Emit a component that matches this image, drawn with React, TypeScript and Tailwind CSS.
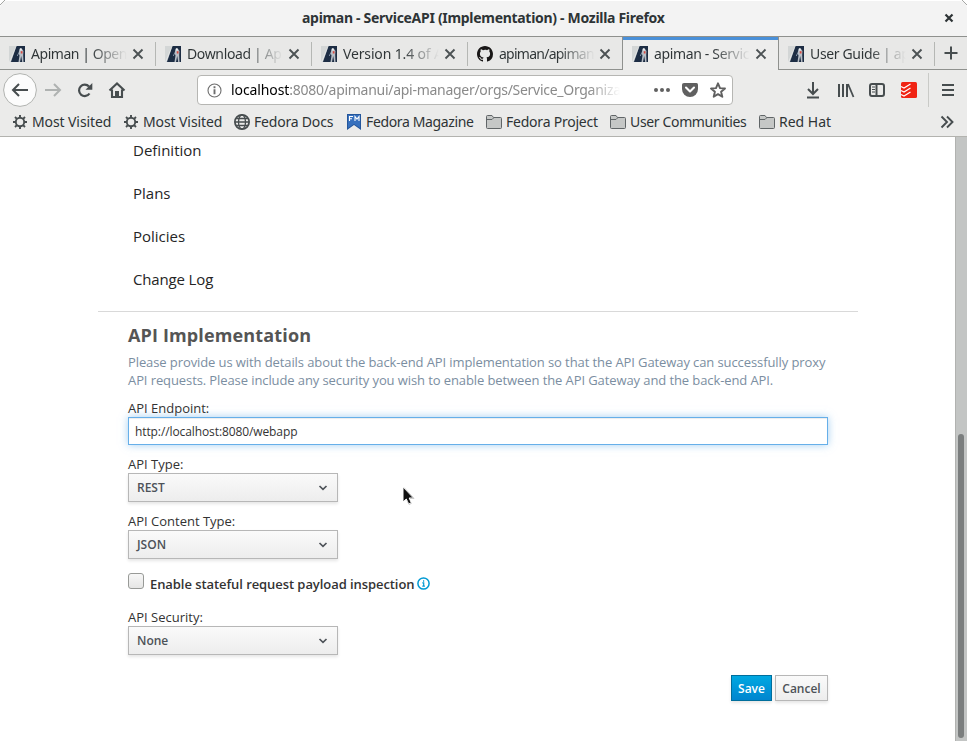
import React from "react";

const chromeFont = "font-['Noto_Sans','Open_Sans',sans-serif]";

function ApimanLogo() {
  return (
    <svg width="16" height="16" viewBox="0 0 16 16" className="shrink-0">
      <path d="M0 0H16V16H0Z" fill="#d3d6d6" />
      <path d="M7.500 0H16V16H1.500Z" fill="#1d2d44" />
      <path d="M0 16L7 0H7.500L2 16Z" fill="#f4f5f5" opacity=".6" />
      <path d="M10.500 3.500L11.500 2l1.500 1L14.500 5l-.3 4 .3 7h-1.300l-1-6-1.200 6H9.500l1-6.500L9.500 7z" fill="#b9bfc7" />
      <path d="M10.800 2.500h2V4.500h-2z" fill="#eef0f2" />
      <path d="M11.800 5.200h1.700v2.300h-1.700z" fill="#d9493f" />
      <path d="M9.700 7L8.300 10" stroke="#8290a3" />
    </svg>
  );
}

function GithubLogo() {
  return (
    <svg width="16" height="16" viewBox="0 0 16 16" className="shrink-0">
      <path
        fill="#191717"
        d="M8 0C3.58 0 0 3.58 0 8c0 3.54 2.29 6.53 5.47 7.59.4.07.55-.17.55-.38 0-.19-.01-.82-.01-1.49-2.01.37-2.53-.49-2.69-.94-.09-.23-.48-.94-.82-1.13-.28-.15-.68-.52-.01-.53.63-.01 1.08.58 1.23.82.72 1.21 1.87.87 2.33.66.07-.52.28-.87.51-1.07-1.78-.2-3.64-.89-3.64-3.95 0-.87.31-1.59.82-2.15-.08-.2-.36-1.02.08-2.12 0 0 .67-.21 2.2.82A7.6 7.6 0 0 1 8 3.86c.68 0 1.36.09 2 .27 1.53-1.04 2.2-.82 2.2-.82.44 1.1.16 1.92.08 2.12.51.56.82 1.27.82 2.15 0 3.07-1.87 3.75-3.65 3.95.29.25.54.73.54 1.48 0 1.07-.01 1.93-.01 2.2 0 .21.15.46.55.38A8.01 8.01 0 0 0 16 8c0-4.42-3.58-8-8-8z"
      />
    </svg>
  );
}

interface TabProps {
  title: string;
  tracking: string;
  github?: boolean;
  active?: boolean;
  divider?: boolean;
}

function Tab({ title, tracking, github, active, divider }: TabProps) {
  return (
    <div
      className={
        active
          ? "flex h-[33px] w-[157px] shrink-0 items-center border-x border-[#8f918e] bg-[#ededec] pl-[9px] shadow-[inset_0_3px_0_#4a90d9]"
          : "flex h-8 w-[156px] shrink-0 items-center pl-[9px] pt-px"
      }
    >
      {github ? <GithubLogo /> : <ApimanLogo />}
      <span
        className={`ml-[6px] h-[21px] w-[96px] shrink-0 whitespace-nowrap bg-gradient-to-r from-[#2e3436] from-62% to-transparent bg-clip-text text-[14px] leading-[21px] text-transparent ${tracking}`}
      >
        {title}
      </span>
      <svg width="12" height="12" viewBox="0 0 12 12" className={github ? "ml-1 shrink-0" : "ml-[5px] shrink-0"}>
        <path d="M1.500 1.500l9 9m0-9l-9 9" stroke="#4c5254" strokeWidth="1.900" />
      </svg>
      {divider && <span className="ml-auto h-[24px] w-px bg-[#b5b7b4]" />}
    </div>
  );
}

function Gear() {
  return (
    <svg width="16" height="16" viewBox="0 0 16 16" fill="none" stroke="#474d4f">
      <circle cx="8" cy="8" r="4.200" strokeWidth="1.900" />
      <path
        d="M8 1v2.500M8 12.500v2.500M1 8h2.500M12.500 8H15M3 3l1.900 1.900M11.100 11.100L13 13M3 13l1.900-1.900M11.100 4.900L13 3"
        strokeWidth="1.900"
      />
    </svg>
  );
}

function Globe() {
  return (
    <svg width="16" height="16" viewBox="0 0 16 16" fill="none" stroke="#474d4f" strokeWidth="1.300">
      <circle cx="8" cy="8" r="7.100" strokeWidth="1.800" />
      <ellipse cx="8" cy="8" rx="3.500" ry="7.100" />
      <path d="M1 8h14M2.300 4.500h11.400M2.300 11.500h11.400" />
    </svg>
  );
}

function FedoraMagazine() {
  return (
    <svg width="14" height="16" viewBox="0 0 14 16">
      <path d="M0 0h14v16l-7-5-7 5z" fill="#24569b" />
      <path d="M1 1h12v13l-6-4-6 4z" fill="#3770bd" />
      <path d="M2.500 7V2.500H6M2.500 4.700H5M8 7V2.500l2 2.500 2-2.500V7" fill="none" stroke="#fff" strokeWidth="1.100" />
    </svg>
  );
}

function Folder() {
  return (
    <svg width="16" height="16" viewBox="0 0 16 16">
      <path d="M.5 2.500v11q0 1 1 1h13q1 0 1-1V4.500q0-1-1-1H7.500L6 1.500H1.500q-1 0-1 1z" fill="#c5c7c6" stroke="#606567" />
      <path d="M1 5.500h5l2-2" fill="none" stroke="#606567" />
    </svg>
  );
}

interface BookmarkProps {
  icon: React.ReactNode;
  label: string;
  width: string;
  gap: string;
  tracking: string;
}

function Bookmark({ icon, label, width, gap, tracking }: BookmarkProps) {
  return (
    <div className={`flex shrink-0 items-center ${width} ${gap}`}>
      {icon}
      <span className={`whitespace-nowrap ${tracking}`}>{label}</span>
    </div>
  );
}

function Toolbar() {
  return (
    <div className="flex h-10 items-center">
      <svg width="130" height="40" viewBox="0 0 130 40" fill="none" stroke="#474d4f" strokeWidth="2" className="shrink-0">
        <circle cx="20" cy="20" r="16.400" fill="#fcfcfc" stroke="#b1b3b0" strokeWidth="1" />
        <path d="M28 20H13.500M19 14l-6 6 6 6" />
        <path d="M45 20h14.500M54 14l6 6-6 6" stroke="#afb2b1" />
        <path d="M89.500 23.500A5.700 5.700 0 1 1 89 16.500" strokeWidth="2.200" />
        <path d="M92.300 13v6.700H85.500z" fill="#474d4f" stroke="none" />
        <path d="M109.500 20.500l7.500-7 7.500 7M112 19.500V27h10v-7.500" strokeWidth="2.100" />
        <path d="M115 21h4v6.500h-4z" fill="#474d4f" stroke="none" />
      </svg>
      <div className="ml-[67px] flex h-[30px] w-[536px] shrink-0 items-center rounded-[4px] border border-[#b6b6b3] bg-white pl-[9px]">
        <svg width="15" height="15" viewBox="0 0 15 15" className="shrink-0">
          <circle cx="7.500" cy="7.500" r="6.500" fill="none" stroke="#6e6e6e" strokeWidth="1.100" />
          <path d="M7.500 6.300v5M7.500 3.300v1.900" stroke="#6e6e6e" strokeWidth="1.900" />
        </svg>
        <span className="ml-[9px] w-[393px] shrink-0 whitespace-nowrap text-[14px] leading-5 tracking-[-0.28px] text-[#8a8a8a] [mask-image:linear-gradient(to_right,black_91%,transparent_99%)]">
          <span className="tracking-[-0.1px] text-black">localhost</span>:8080/apimanui/api-manager/orgs/Service_Organiza
        </span>
        <svg width="76" height="16" viewBox="0 0 76 16" className="ml-[29px] shrink-0" fill="none" stroke="#606060">
          <circle cx="3" cy="8" r="2" fill="#606060" stroke="none" />
          <circle cx="9" cy="8" r="2" fill="#606060" stroke="none" />
          <circle cx="15" cy="8" r="2" fill="#606060" stroke="none" />
          <path d="M31 1h12.500q1.500 0 1.500 1.500V7a8 8 0 0 1-16 0V2.500Q29 1 31 1z" fill="#606060" stroke="none" />
          <path d="M33 5.500l4 4 4-4" stroke="#fff" strokeWidth="2.100" strokeLinecap="round" strokeLinejoin="round" />
          <path d="M65 1.300l2 4.800 5 .4-3.900 3.300 1.200 5-4.300-2.700-4.300 2.700 1.200-5L58 6.500l5-.4z" strokeWidth="1.900" strokeLinejoin="round" />
        </svg>
      </div>
      <svg width="152" height="36" viewBox="0 0 152 36" className="ml-[72px] shrink-0" fill="none" stroke="#474d4f" strokeWidth="2">
        <path d="M8 10v12M3 17l5 5 5-5M2 25.500h12" />
        <path d="M34 12v13M38 12v13M42 12v13" />
        <path d="M43 12l5.500 13" strokeWidth="1.800" />
        <rect x="65" y="12" width="14" height="12" rx="2" />
        <path d="M71.500 12v12" />
        <path d="M67 15h3M67 17.500h3M67 20h3" strokeWidth="1" />
        <rect x="96" y="10" width="16" height="16" rx="1.500" fill="#f02414" stroke="none" />
        <path d="M96 14.500l3 1.500 6.500-4M96 18.500l3 1.500 6.500-4M96 22.500l3 1.500 6.500-4" stroke="#fff" strokeWidth="1.200" />
        <path d="M123.500 1v34" stroke="#c9cac7" strokeWidth="1" />
        <path d="M137 13h12M137 18h12M137 23h12" />
      </svg>
    </div>
  );
}

function Select({ value }: { value: string }) {
  return (
    <div className="flex h-[29px] w-[210px] items-center justify-between border border-[#b7b7b7] bg-gradient-to-b from-[#fafafa] to-[#ededed] pl-2 pr-[9px] text-[12px] font-semibold text-[#4d5258] shadow-[0_2px_3px_rgba(3,3,3,0.1)]">
      <span>{value}</span>
      <svg width="10" height="8" viewBox="0 0 10 8">
        <path d="M1.500 2L5 5.300 8.500 2" fill="none" stroke="#4d5258" strokeWidth="1.700" />
      </svg>
    </div>
  );
}

export default function App() {
  return (
    <div className="flex h-[741px] w-[967px] flex-col overflow-hidden bg-white">
      <header className={`${chromeFont} relative shrink-0 text-[#2e3436]`}>
        <div className="flex h-[37px] items-center rounded-t-[7px] border-b border-[#8f918e] bg-[#f3f3f3] shadow-[inset_0_1px_0_#fff]">
          <span className="ml-[302px] w-[364px] whitespace-nowrap text-[14px] font-bold leading-5 tracking-[-0.3px]">
            apiman - ServiceAPI (Implementation) - Mozilla Firefox
          </span>
          <svg width="10" height="10" viewBox="0 0 10 10" className="ml-auto mr-[13px]">
            <path d="M1.500 1.500l7 7m0-7l-7 7" stroke="#2e3436" strokeWidth="2.200" />
          </svg>
        </div>
        <svg width="6" height="6" viewBox="0 0 6 6" className="absolute left-0 top-0">
          <path d="M0 5L5 0" stroke="#a5a7a4" fill="none" />
        </svg>
        <svg width="6" height="6" viewBox="0 0 6 6" className="absolute right-0 top-0">
          <path d="M1 0L6 5" stroke="#a5a7a4" fill="none" />
        </svg>
        <div className="flex h-[33px] bg-[#e8e8e7] shadow-[inset_0_-1px_0_#8f918e]">
          <Tab title="Apiman | Open" tracking="tracking-[-0.45px]" divider />
          <Tab title="Download | Ap" tracking="tracking-[-0.35px]" divider />
          <Tab title="Version 1.4 of A" tracking="tracking-[-0.15px]" divider />
          <div className="-mr-[2px] flex">
            <Tab title="apiman/apiman" tracking="tracking-[-0.75px]" github />
          </div>
          <Tab title="apiman - Servic" tracking="tracking-[-0.35px]" active />
          <Tab title="User Guide | ap" tracking="tracking-[-0.35px]" divider />
          <svg width="32" height="32" viewBox="0 0 32 32">
            <path d="M16 9.500v13M9.500 16h13" stroke="#474d4f" strokeWidth="2" />
          </svg>
        </div>
        <div className="bg-[#ebebea]">
          <Toolbar />
          <div className="flex h-[27px] items-center border-b border-[#b3b3af] pb-[3px] pl-3 text-[14px]">
            <Bookmark icon={<Gear />} label="Most Visited" width="w-[111px]" gap="gap-1" tracking="tracking-[-0.1px]" />
            <Bookmark icon={<Gear />} label="Most Visited" width="w-[111px]" gap="gap-1" tracking="tracking-[-0.1px]" />
            <Bookmark icon={<Globe />} label="Fedora Docs" width="w-[113px]" gap="gap-1" tracking="tracking-[-0.2px]" />
            <Bookmark icon={<FedoraMagazine />} label="Fedora Magazine" width="w-[139px]" gap="gap-[5px]" tracking="tracking-[-0.36px]" />
            <Bookmark icon={<Folder />} label="Fedora Project" width="w-[124px]" gap="gap-1" tracking="tracking-[-0.22px]" />
            <Bookmark icon={<Folder />} label="User Communities" width="w-[149px]" gap="gap-1" tracking="tracking-[-0.35px]" />
            <Bookmark icon={<Folder />} label="Red Hat" width="w-[90px]" gap="gap-1" tracking="tracking-normal" />
            <svg width="14" height="14" viewBox="0 0 14 14" className="ml-auto mr-[13px]">
              <path d="M1.500 1.500L7 7l-5.500 5.500M7 1.500L12.500 7 7 12.500" fill="none" stroke="#474d4f" strokeWidth="1.900" />
            </svg>
          </div>
        </div>
      </header>

      <div className="flex min-h-0 grow font-['Open_Sans',sans-serif]">
        <main className="relative w-[955px] pl-[98px] text-[#333]">
          <nav className="-mt-2 h-[183px] w-[760px] border-b border-[#d9d9d9] pl-[35px] text-[15px] leading-[43px] text-[#252525]">
            <div>Definition</div>
            <div>Plans</div>
            <div>Policies</div>
            <div className="tracking-[-0.15px]">Change Log</div>
          </nav>
          <section className="w-[730px] pl-[30px] text-[13px]">
            <h1 className="pt-[10px] text-[18px] font-bold leading-[26px] tracking-[0.14px] text-[#555]">API Implementation</h1>
            <p className="mt-[5px] whitespace-nowrap leading-[18px] tracking-[-0.095px] text-[#7b8ea1]">
              Please provide us with details about the back-end API implementation so that the API Gateway can successfully proxy
              <br />
              API requests. Please include any security you wish to enable between the API Gateway and the back-end API.
            </p>
            <div className="mt-[10px] leading-[18px]">API Endpoint:</div>
            <div className="flex h-7 items-center border border-[#66afe9] px-[6px] pt-px text-[12px] tracking-[-0.1px] shadow-[inset_0_1px_1px_rgba(0,0,0,0.075),0_0_8px_rgba(102,175,233,0.6)]">
              http://localhost:8080/webapp
            </div>
            <div className="mt-[10px] leading-[18px]">API Type:</div>
            <Select value="REST" />
            <div className="mt-[10px] leading-[18px]">API Content Type:</div>
            <Select value="JSON" />
            <div className="mt-[14px] flex h-[20px]">
              <span className="h-4 w-4 rounded-[3px] border border-[#989a97] bg-gradient-to-b from-[#f7f7f7] to-[#e6e6e5]" />
              <span className="ml-[6px] mt-[2px] font-semibold leading-[18px] tracking-[-0.07px]">
                Enable stateful request payload inspection
              </span>
              <svg width="13" height="13" viewBox="0 0 13 13" className="ml-[3px] mt-1">
                <circle cx="6.500" cy="6.500" r="5.600" fill="none" stroke="#0099d3" strokeWidth="1.500" />
                <path d="M5.300 5.900h1.400v3M5.300 9.200h2.600M6.600 3.300v1.500" fill="none" stroke="#0099d3" strokeWidth="1.200" />
              </svg>
            </div>
            <div className="mt-[15px] leading-[18px]">API Security:</div>
            <Select value="None" />
            <div className="mt-5 flex justify-end gap-[3px] text-[12px] font-semibold">
              <button className="h-[26px] w-[41px] border border-[#006e9c] bg-gradient-to-b from-[#00a8e1] to-[#0085cf] pt-px text-white shadow-[0_2px_3px_rgba(3,3,3,0.1)]">
                Save
              </button>
              <button className="h-[26px] w-[53px] border border-[#b7b7b7] bg-gradient-to-b from-[#fafafa] to-[#ededed] pt-px text-[#4d5258] shadow-[0_2px_3px_rgba(3,3,3,0.1)]">
                Cancel
              </button>
            </div>
          </section>
          <svg width="14" height="20" viewBox="0 0 14 20" className="absolute left-[402px] top-[349px]">
            <path d="M1 1v15l3.300-3L6.600 18l2.700-1.200L7.200 12H11.500z" fill="#111" stroke="#fff" strokeWidth="1" />
            <path d="M5 14l2 4.500 2.700-1.200M8 12.500h4L2 1.500" stroke="#aaa" strokeWidth=".6" fill="none" />
          </svg>
        </main>
        <aside className="flex w-3 flex-col justify-end border-l border-[#b1b2b0] bg-[#c3c5c4] pb-[3px] pl-[2px]">
          <div className="h-[304px] w-[6px] rounded-full bg-[#7b7e7e]" />
        </aside>
      </div>
    </div>
  );
}
